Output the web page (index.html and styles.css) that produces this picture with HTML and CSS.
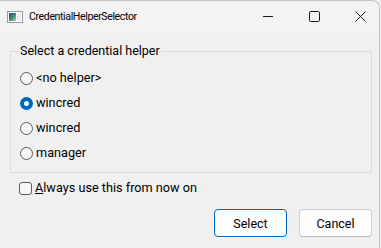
FILE: index.html
```html
<!DOCTYPE html>
<html>
<head>
<meta charset="utf-8">
<link rel="stylesheet" href="styles.css">
</head>
<body>
<div class="window">
  <div class="titlebar">
    <div class="app-icon">
      <svg width="16" height="12" viewBox="0 0 16 12">
        <defs>
          <linearGradient id="g" x1="0" y1="0" x2="1" y2="1">
            <stop offset="0" stop-color="#2a4f8a"/>
            <stop offset="0.5" stop-color="#3a8a7a"/>
            <stop offset="1" stop-color="#a8d8b0"/>
          </linearGradient>
        </defs>
        <rect x="0.5" y="0.5" width="15" height="11" fill="#fff" stroke="#9a9a9a"/>
        <rect x="2" y="2" width="7" height="8" fill="url(#g)"/>
        <rect x="10" y="2" width="4" height="8" fill="#e8eef4"/>
      </svg>
    </div>
    <div class="title">CredentialHelperSelector</div>
    <div class="controls">
      <svg class="ctl-min" width="10" height="11" viewBox="0 0 10 11"><path d="M0 5.5H10" stroke="#1a1a1a" stroke-width="1"/></svg>
      <svg class="ctl-max" width="11" height="11" viewBox="0 0 11 11"><rect x="0.5" y="0.5" width="10" height="10" rx="1.2" fill="none" stroke="#1a1a1a" stroke-width="1"/></svg>
      <svg class="ctl-close" width="11" height="11" viewBox="0 0 11 11"><path d="M0.5 0.5L10.5 10.5M10.5 0.5L0.5 10.5" stroke="#1a1a1a" stroke-width="1"/></svg>
    </div>
  </div>
  <div class="content">
    <fieldset class="group">
      <legend class="legend">Select a credential helper</legend>
      <div class="option"><span class="radio"></span><span class="label">&lt;no helper&gt;</span></div>
      <div class="option"><span class="radio checked"></span><span class="label">wincred</span></div>
      <div class="option"><span class="radio"></span><span class="label">wincred</span></div>
      <div class="option"><span class="radio"></span><span class="label">manager</span></div>
    </fieldset>
    <div class="check-row"><span class="checkbox"></span><span class="label"><u>A</u>lways use this from now on</span></div>
    <div class="buttons">
      <div class="btn default">Select</div>
      <div class="btn">Cancel</div>
    </div>
  </div>
</div>
</body>
</html>
```
FILE: styles.css
```css
html, body {
  margin: 0;
  padding: 0;
  background: #f0f0f0;
}
body {
  width: 381px;
  height: 248px;
  overflow: hidden;
  font-family: Roboto, "Liberation Sans", sans-serif;
  font-size: 12px;
  color: #000;
}
.window {
  width: 380px;
  height: 248px;
  box-sizing: border-box;
  border-top: 1px solid #c4c4c4;
  border-right: 1px solid #c4c4c4;
  border-top-right-radius: 8px;
  background: #f0f0f0;
  display: flex;
  flex-direction: column;
}
.titlebar {
  height: 31px;
  background: #f3f3f3;
  display: flex;
  align-items: center;
  border-top-right-radius: 8px;
}
.app-icon {
  width: 16px;
  height: 12px;
  margin-left: 7px;
  margin-right: 6px;
  display: flex;
}
.title {
  font-size: 10.6px;
  letter-spacing: -0.4px;
  line-height: 16px;
  margin-top: 1px;
}
.controls {
  margin-left: auto;
  display: flex;
  align-items: center;
  gap: 35px;
  padding-right: 13px;
}
.ctl-max {
  margin-left: 1px;
}
.content {
  display: flex;
  flex-direction: column;
}
.group {
  margin: 11px 7px 0 10px;
  padding: 10px 0 10px 9px;
  border: 1px solid #dcdcdc;
  display: flex;
  flex-direction: column;
  gap: 7px;
}
.legend {
  margin-left: -1px;
  padding: 0 1px;
  line-height: 16px;
  font-size: 12.5px;
}
.option {
  display: flex;
  align-items: center;
  height: 18px;
}
.radio {
  width: 13px;
  height: 13px;
  box-sizing: border-box;
  border: 1px solid #5c5c5c;
  border-radius: 50%;
  background: #f6f6f6;
  margin-right: 3px;
}
.radio.checked {
  border: 4px solid #0067c0;
  background: #fff;
}
.label {
  font-size: 12.7px;
  line-height: 16px;
}
.check-row {
  display: flex;
  align-items: center;
  margin: 6px 0 0 19px;
  height: 18px;
}
.checkbox {
  width: 13px;
  height: 13px;
  box-sizing: border-box;
  border: 1px solid #5c5c5c;
  border-radius: 3px;
  background: #f6f6f6;
  margin-right: 3px;
}
.buttons {
  display: flex;
  justify-content: flex-end;
  gap: 12px;
  margin: 12px 7px 0 0;
}
.btn {
  width: 73px;
  height: 28px;
  box-sizing: border-box;
  border: 1px solid #d0d0d0;
  border-bottom-color: #bdbdbd;
  border-radius: 4px;
  background: #fdfdfd;
  display: flex;
  align-items: center;
  justify-content: center;
  font-size: 12.5px;
}
.btn.default {
  border: 1px solid #0067c0;
}
```
